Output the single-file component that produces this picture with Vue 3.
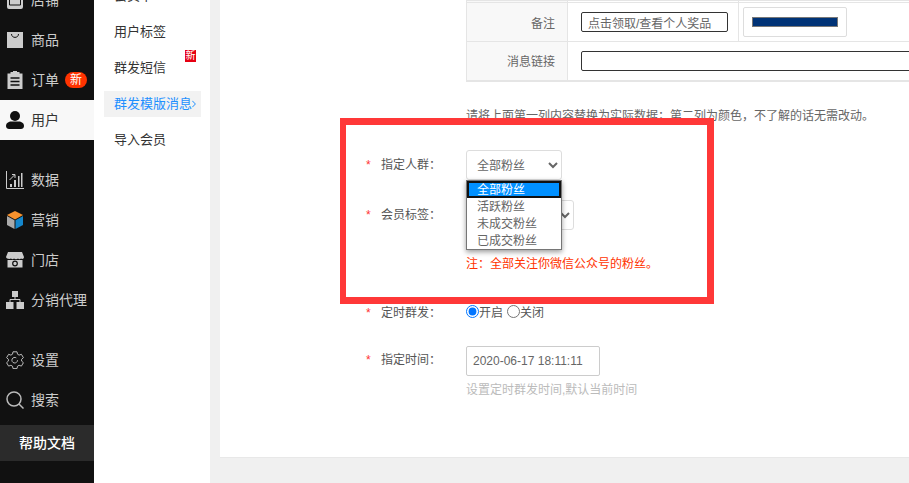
<script setup>
const fans = ['全部粉丝', '活跃粉丝', '未成交粉丝', '已成交粉丝']
</script>

<template>
  <div class="page">
    <aside class="side">
      <ul class="nav">
        <li class="nav-item">
          <svg class="ico" viewBox="0 0 18 18"><path fill="#ccc" d="M2 0h14l2 5H0zM1 6h16v10a2 2 0 0 1-2 2H3a2 2 0 0 1-2-2z" /><path fill="none" stroke="#111" d="M3.500 6.500v7.500h11V6.500" /></svg>
          <span>店铺</span>
        </li>
        <li class="nav-item">
          <svg class="ico" viewBox="0 0 18 18"><path fill="#ccc" d="M1 1h16v16H1z" /><path fill="none" stroke="#111" stroke-width="1" d="M5.500 3c0 4.500 7 4.500 7 0" /></svg>
          <span>商品</span>
        </li>
        <li class="nav-item">
          <svg class="ico" viewBox="0 0 18 18"><path fill="#ccc" d="M1.500 2.500h3V1H7V0h4v1h2.500v1.500h3V18h-15z" /><path stroke="#111" stroke-width="1.300" d="M4.500 7h9M4.500 10.500h9M4.500 14h9" /></svg>
          <span>订单</span>
          <b class="hot">新</b>
        </li>
        <li class="nav-item active">
          <svg class="ico" viewBox="0 0 18 18"><ellipse cx="9" cy="5" rx="5" ry="5" fill="#111" /><path fill="#111" d="M0 15c0-3 2.500-4.500 5.500-4.500h7c3 0 5.500 1.500 5.500 4.500 0 2-1.500 3-3 3H3c-1.500 0-3-1-3-3z" /></svg>
          <span>用户</span>
        </li>
        <li class="nav-gap"></li>
        <li class="nav-item">
          <svg class="ico" viewBox="0 0 18 18"><path fill="none" stroke="#ccc" d="M.5 0v17.500H18" /><path fill="#ccc" d="M4 13h2v3H4zM8 9h2v7H8zM12 5h1.500v11H12zM15 2h1.500v14H15z" /><path fill="none" stroke="#ccc" d="M3.500 9l5-5M6 3.500h3V7" /></svg>
          <span>数据</span>
        </li>
        <li class="nav-item">
          <svg class="ico" viewBox="0 0 18 18"><path fill="#f7922e" d="M9 0l8 4-8 4.500L1 4z" /><path fill="#aaa" d="M1 5l7.500 4.200V18L1 14z" /><path fill="#1587cc" d="M17 5L9.500 9.200V18l7.500-4z" /></svg>
          <span>营销</span>
        </li>
        <li class="nav-item">
          <svg class="ico" viewBox="0 0 18 18"><path fill="#ccc" d="M2 1h14l2 5c0 2-2 2.500-3 1.500-1 1-2 1-3 0-1 1-3 1-4 0-1 1-2 1-3 0C4 8.500 0 8 0 6zM1.500 9h15v7.500h-15z" /><circle cx="9" cy="12.500" r="2.300" fill="none" stroke="#111" stroke-width="1.200" /></svg>
          <span>门店</span>
        </li>
        <li class="nav-item">
          <svg class="ico" viewBox="0 0 18 18"><path fill="#ccc" d="M6 0h6v6H6zM0 11h7.500v7H0zM10.500 11H18v7h-7.500z" /><path fill="none" stroke="#ccc" d="M9 6v3M4 11V8.500h10V11" /></svg>
          <span>分销代理</span>
        </li>
        <li class="nav-gap"></li>
        <li class="nav-item">
          <svg class="ico" viewBox="0 0 18 18"><path fill="none" stroke="#bbb" d="M7 .8h4l.5 2.400 1.600.9 2.300-.8 2 3.400-1.800 1.600v1.800l1.800 1.600-2 3.400-2.300-.8-1.600.9-.5 2.400H7l-.5-2.400-1.600-.9-2.300.8-2-3.400 1.800-1.600V8.300L.6 6.700l2-3.400 2.300.8 1.600-.9z" /><path fill="none" stroke="#bbb" d="M11.500 9.200a2.800 2.800 0 1 1-1.200-2.300" /></svg>
          <span>设置</span>
        </li>
        <li class="nav-item">
          <svg class="ico" viewBox="0 0 18 18"><circle cx="8" cy="8" r="7" fill="none" stroke="#bbb" stroke-width="1.500" /><path stroke="#bbb" stroke-width="1.500" d="M13 13l4.500 4.500" /></svg>
          <span>搜索</span>
        </li>
      </ul>
      <div class="help">帮助文档</div>
    </aside>

    <nav class="sub">
      <a class="sub-item">会员卡</a>
      <a class="sub-item">用户标签</a>
      <a class="sub-item">群发短信<b class="tag">新</b></a>
      <a class="sub-item current">群发模版消息<svg class="caret" viewBox="0 0 4 8"><path fill="none" stroke="#1e90ff" d="M.3.8L3.400 4 .3 7.200" /></svg></a>
      <a class="sub-item">导入会员</a>
    </nav>

    <main class="main">
      <div class="sheet">
        <table class="tbl">
          <tbody>
            <tr class="clip-row"><th></th><td class="c2"></td><td></td></tr>
            <tr>
              <th>备注</th>
              <td class="c2"><input class="inp short" value="点击领取/查看个人奖品" /></td>
              <td><span class="swatch"><i></i></span></td>
            </tr>
            <tr>
              <th>消息链接</th>
              <td colspan="2"><input class="inp long" /></td>
            </tr>
          </tbody>
        </table>
        <p class="tip">请将上面第一列内容替换为实际数据；第二列为颜色，不了解的话无需改动。</p>

        <div class="row first">
          <label class="lab"><em>*</em>指定人群：</label>
          <div class="ctl">
            <select class="sel one"><option>全部粉丝</option></select>
            <ul class="drop">
              <li v-for="(f, i) in fans" :key="f" :class="{ on: i === 0 }">{{ f }}</li>
            </ul>
          </div>
        </div>
        <div class="row second">
          <label class="lab"><em>*</em>会员标签：</label>
          <div class="ctl">
            <select class="sel two"><option></option></select>
            <p class="note">注：全部关注你微信公众号的粉丝。</p>
          </div>
        </div>
        <div class="row third">
          <label class="lab"><em>*</em>定时群发：</label>
          <div class="ctl radios">
            <input type="radio" name="t" checked /><span>开启</span>
            <input type="radio" name="t" /><span>关闭</span>
          </div>
        </div>
        <div class="row fourth">
          <label class="lab"><em>*</em>指定时间：</label>
          <div class="ctl">
            <input class="time" value="2020-06-17 18:11:11" />
            <p class="hint">设置定时群发时间,默认当前时间</p>
          </div>
        </div>
      </div>
    </main>

    <div class="frame"></div>
  </div>
</template>

<style>
html, body { margin: 0; overflow: hidden; }
</style>

<style scoped>
.page {
  position: relative;
  display: flex;
  width: 909px;
  height: 483px;
  overflow: hidden;
  background: #f0f0f0;
  font: 12px "Liberation Sans", "Noto Sans CJK SC", sans-serif;
  color: #666;
}
.side {
  flex: none;
  width: 94px;
  background: #111;
  margin-top: -20px;
  color: #ccc;
  font-size: 14px;
}
.nav { list-style: none; margin: 0; padding: 0; }
.nav-item {
  display: flex;
  align-items: center;
  height: 40px;
  padding-left: 6px;
  gap: 7px;
  position: relative;
}
.nav-item span { margin-bottom: 2px; }
.nav-gap { height: 20px; }
.ico { width: 18px; height: 18px; flex: none; }
.active { background: #f8f8f8; color: #333; }
.hot {
  position: absolute;
  left: 65px;
  top: 12px;
  width: 22px;
  height: 16px;
  border-radius: 8px;
  background: #f30;
  color: #fff;
  font-size: 12px;
  font-weight: 400;
  line-height: 16px;
  text-align: center;
}
.help {
  margin-top: 5px;
  height: 36px;
  background: #2b2b2b;
  color: #fff;
  line-height: 36px;
  text-align: center;
  font-weight: 500;
}
.sub {
  flex: none;
  width: 116px;
  height: 520px;
  margin-top: -17px;
  box-sizing: border-box;
  background: #fff;
  padding: 0 9px 0 10px;
  display: flex;
  flex-direction: column;
  gap: 10px;
  font-size: 13px;
  color: #333;
}
.sub-item {
  position: relative;
  display: block;
  height: 26px;
  line-height: 26px;
  padding-left: 10px;
}
.current { background: #f2f2f2; color: #1e90ff; }
.caret { width: 4px; height: 8px; }
.tag {
  position: absolute;
  left: 81px;
  top: -5px;
  width: 11px;
  height: 12px;
  background: #e60012;
  color: #fff;
  font-size: 10px;
  font-weight: 400;
  line-height: 12px;
  text-align: center;
}
.main { margin-left: 10px; flex: 1; min-width: 0; }
.sheet { height: 458px; background: #fff; border-bottom: 1px solid #e8e8e8; box-sizing: border-box; overflow: hidden; }
.tbl {
  margin-left: 246px;
  width: 520px;
  table-layout: fixed;
  border-collapse: collapse;
  border-bottom: 2px solid #e5e5e5;
}
.tbl th, .tbl td { border: 1px solid #e5e5e5; padding: 0; height: 39px; }
.tbl th { width: 101px; background: #f8f8f8; font-weight: 400; text-align: right; padding-right: 12px; box-sizing: border-box; }
.tbl td { padding-left: 13px; box-sizing: border-box; }
.tbl .c2 { width: 171px; }
.tbl .clip-row th, .tbl .clip-row td { height: 2px; }
.inp {
  display: block;
  box-sizing: border-box;
  height: 20px;
  border: 1px solid #333;
  border-radius: 2px;
  padding: 0 6px;
  font: 12px "Liberation Sans", "Noto Sans CJK SC", sans-serif;
  color: #666;
  background: #fff;
  outline: none;
}
.short { width: 147px; }
.long { width: 400px; }
.swatch {
  display: block;
  box-sizing: border-box;
  width: 104px;
  height: 30px;
  margin-left: -9px;
  border: 1px solid #ddd;
  border-radius: 2px;
  padding: 9px 8px;
}
.swatch i { display: block; height: 100%; background: #037; border: 1px solid #777; box-sizing: border-box; }
.tip { margin: 26px 0 0 246px; height: 17px; line-height: 17px; color: #666; white-space: nowrap; }
.row { display: flex; }
.first { margin-top: 25px; height: 50px; }
.second { height: 98px; }
.third { height: 48px; }
.lab { width: 246px; box-sizing: border-box; padding-left: 146px; line-height: 30px; color: #555; white-space: nowrap; flex: none; }
.lab em { display: inline-block; width: 15px; font-style: normal; color: #f33; }
.ctl { position: relative; }
.sel {
  display: block;
  box-sizing: border-box;
  height: 30px;
  border: 1px solid #ddd;
  border-radius: 3px;
  background: #fff;
  color: #666;
  padding: 2px 6px 0;
  font: 12px "Liberation Sans", "Noto Sans CJK SC", sans-serif;
  outline: none;
}
.one { width: 96px; }
.two { width: 108px; }
.drop {
  position: absolute;
  left: 0;
  top: 30px;
  z-index: 2;
  width: 96px;
  box-sizing: border-box;
  margin: 0;
  padding: 0;
  list-style: none;
  background: #fff;
  border: 1px solid #767676;
  box-shadow: 0 2px 5px rgba(0, 0, 0, .4);
  color: #666;
}
.drop li { height: 17px; line-height: 19px; padding-left: 10px; box-sizing: border-box; }
.drop .on { background: #0090ff; color: #fff; outline: 2px solid #111; outline-offset: -2px; }
.note { margin: 26px 0 0; height: 17px; line-height: 17px; color: #f30; white-space: nowrap; }
.radios { display: flex; align-items: center; height: 17px; margin-top: 5px; color: #555; }
.radios input { width: 13px; height: 13px; margin: 0; accent-color: #0075ff; }
.radios span { margin-right: 4px; }
.third .lab { line-height: 31px; }
.fourth .lab { line-height: 28px; }
.time {
  display: block;
  box-sizing: border-box;
  width: 134px;
  height: 30px;
  border: 1px solid #ccc;
  border-radius: 2px;
  padding: 0 6px;
  font: 12px "Liberation Sans", "Noto Sans CJK SC", sans-serif;
  color: #666;
  outline: none;
}
.hint { margin: 6px 0 0; height: 17px; line-height: 17px; color: #bbb; white-space: nowrap; }
.frame {
  position: absolute;
  left: 340px;
  top: 118px;
  width: 374px;
  height: 186px;
  box-sizing: border-box;
  border: 7px solid #ff3838;
  border-left-width: 6px;
  pointer-events: none;
}
</style>
